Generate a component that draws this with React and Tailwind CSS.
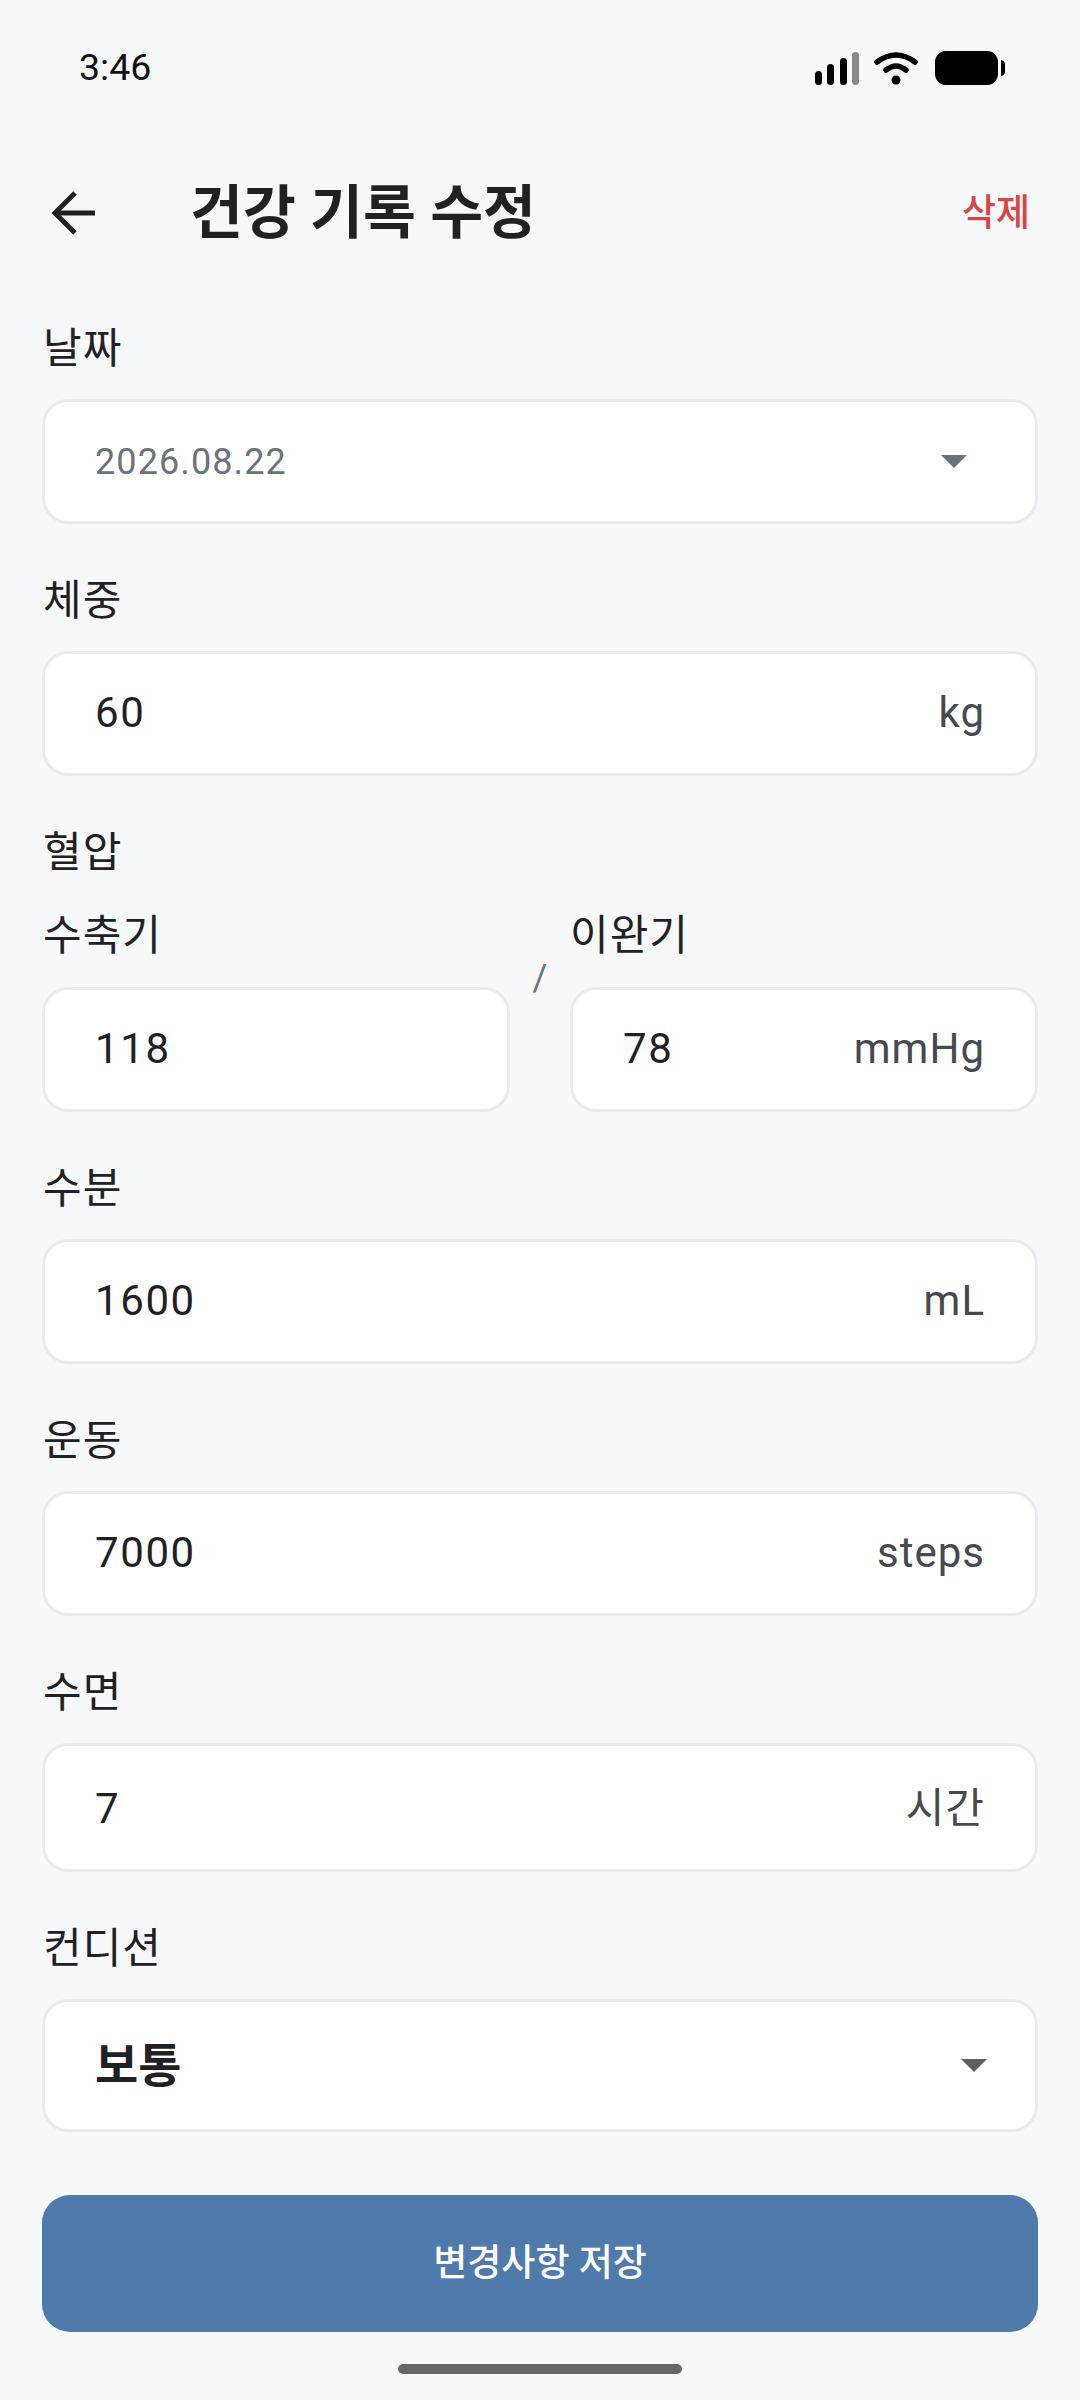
const KR = { fontFamily: 'Roboto, "Noto Sans CJK KR", sans-serif' };

function Caret({ className }) {
  return (
    <svg className={className} viewBox="0 0 26 13" width="26" height="13">
      <path d="M0 0 H26 L13 13 Z" fill="currentColor" />
    </svg>
  );
}

function Box({ value, unit, h = "h-[125px]", lift = "mb-[3px]", valueClass = "text-[42px] tracking-[1.6px] text-[#1f2125]", pr = "pr-[50px]", children }) {
  return (
    <div className={`${h} ${pr} flex items-center justify-between rounded-[26px] border-[3px] border-[#e9ebee] bg-white pl-[50px]`}>
      <span className={`${valueClass} ${lift}`}>{value}</span>
      {unit && <span className={`text-[42px] tracking-[1px] text-[#46494f] ${lift}`}>{unit}</span>}
      {children}
    </div>
  );
}

function Label({ children, inset = "pl-[1px]" }) {
  return <div className={`h-[56px] text-[42px] leading-[58px] tracking-[1px] text-[#1f2125] ${inset}`}>{children}</div>;
}

function Field({ label, ...rest }) {
  return (
    <div className="flex flex-col gap-[23px]">
      <Label>{label}</Label>
      <Box {...rest} />
    </div>
  );
}

export default function App() {
  return (
    <div style={KR} className="flex h-[2400px] w-[1080px] flex-col overflow-hidden bg-[#f7f8fa]">
      <div className="flex h-[171px] items-start justify-between pl-[79px] pr-[75px] pt-[44px]">
        <span className="text-[37.5px] leading-[46px] text-[#111]">3:46</span>
        <svg width="190" height="40" viewBox="0 0 190 40" className="mt-[7px]">
          <rect x="0" y="20" width="7" height="14" rx="3.5" fill="#000" />
          <rect x="12" y="13" width="7" height="21" rx="3.5" fill="#000" />
          <rect x="25" y="7" width="7" height="27" rx="3.5" fill="#000" />
          <rect x="37" y="1" width="7" height="33" rx="3.5" fill="#8a8a8a" />
          <path d="M62 11 Q81 -3 100 11" fill="none" stroke="#000" strokeWidth="5.5" strokeLinecap="round" />
          <path d="M71 19 Q81 11 91 19" fill="none" stroke="#000" strokeWidth="5.5" strokeLinecap="round" />
          <circle cx="81" cy="29" r="4.5" fill="#000" />
          <rect x="120" y="0" width="63" height="34" rx="11" fill="#000" />
          <path d="M186 9 Q190 10 190 13 V21 Q190 24 186 25 Z" fill="#000" />
        </svg>
      </div>

      <div className="flex h-[84px] items-center justify-between pl-[51px] pr-[50px]">
        <div className="flex items-center">
          <svg width="46" height="44" viewBox="0 0 46 44" fill="none" stroke="#1f2125" strokeWidth="5">
            <path d="M44 22 H4" />
            <path d="M24 2 L4 22 L24 42" />
          </svg>
          <span className="ml-[93px] mt-[3px] text-[57.5px] font-bold text-[#1f2125]">건강 기록 수정</span>
        </div>
        <span className="mt-[1px] text-[37px] font-medium text-[#d94545]">삭제</span>
      </div>

      <div className="flex flex-col gap-[48px] px-[42px] pt-[65px]">
        <div className="flex flex-col gap-[23px]">
          <Label>날짜</Label>
          <Box value="2026.08.22" lift="mt-[1px]" valueClass="text-[36px] tracking-[1.1px] text-[#6b7280]" pr="pr-[68px]">
            <Caret className="text-[#6b7280]" />
          </Box>
        </div>

        <Field label="체중" value="60" unit="kg" />

        <div className="flex flex-col">
          <Label>혈압</Label>
          <div className="mt-[27px] flex">
            <div className="flex flex-1 flex-col gap-[24px]">
              <Label>수축기</Label>
              <Box value="118" />
            </div>
            <div className="mt-[44px] w-[60px] text-center text-[36px] text-[#6b7280]">/</div>
            <div className="flex flex-1 flex-col gap-[24px]">
              <Label inset="pl-0">이완기</Label>
              <Box value="78" unit="mmHg" />
            </div>
          </div>
        </div>

        <Field label="수분" value="1600" unit="mL" />
        <Field label="운동" value="7000" unit="steps" />
        <Field label="수면" value="7" unit="시간" h="h-[129px]" lift="mt-[1px]" />

        <div className="flex flex-col gap-[23px]">
          <Label>컨디션</Label>
          <Box value="보통" h="h-[133px]" lift="mt-[2px]" valueClass="text-[47px] font-bold text-[#1f2125]" pr="pr-[48px]">
            <Caret className="text-[#5f5f5f]" />
          </Box>
        </div>
      </div>

      <div className="mx-[42px] mt-[63px] flex h-[137px] items-center justify-center rounded-[28px] bg-[#4f7aac] text-[37px] font-medium text-white">
        변경사항 저장
      </div>

      <div className="mx-auto mt-[32px] h-[10px] w-[284px] rounded-[5px] bg-[#666666]" />
    </div>
  );
}
